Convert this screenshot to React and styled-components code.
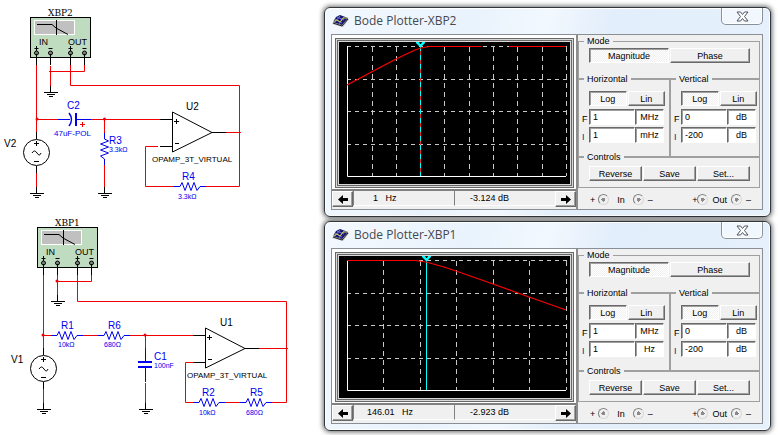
import React, { useId } from "react";
import styled, { createGlobalStyle, css } from "styled-components";

const GlobalStyle = createGlobalStyle`
  *, *::before, *::after { box-sizing: border-box; }
  body {
    margin: 0;
    background: #fff;
    color: #000;
    font: 9px/10px "Liberation Sans", Arial, sans-serif;
  }
`;

const Page = styled.main`
  display: grid;
  grid-template-columns: 324px minmax(0, 1fr);
`;

const Schematics = styled.section`
  display: flex;
  flex-direction: column;
`;

const Plotters = styled.section`
  display: flex;
  flex-direction: column;
  gap: 4px;
  padding: 7px 7px 4px 0;
`;

/* ---------- schematic drawing ---------- */

const Diagram = styled.svg`
  display: block;
  width: 324px;
  height: ${(p) => p.$height}px;
  fill: none;
  stroke: #000;
  font-family: "Liberation Sans", Arial, sans-serif;
`;

const Wire = styled.path`
  stroke: ${(p) => p.$color || "#f00000"};
  stroke-width: ${(p) => p.$width || 1};
`;

const Mark = styled.text`
  stroke: none;
  fill: ${(p) => p.$color || "#000"};
  font-size: ${(p) => p.$size || 10}px;
`;

const Heading = styled(Mark)`
  font-family: "DejaVu Serif", serif;
  font-size: 9px;
`;

const BLUE = "#0000f0";

function Ground({ x, y }) {
  return (
    <Wire
      $color="#000"
      d={`M${x + 0.5} ${y}v7M${x - 6} ${y + 6.5}h14M${x - 3} ${y + 8.5}h8M${x - 1} ${y + 10.5}h4`}
    />
  );
}

function Instrument({ x, y, name }) {
  return (
    <g transform={`translate(${x} ${y})`}>
      <Heading x="18" y="-1">{name}</Heading>
      <rect x="0.5" y="0.5" width="60" height="40" fill="#c0dcc0" />
      <rect x="4.5" y="3.5" width="40" height="14" fill="#c0c0c0" stroke="#fff" />
      <path d="M7 7.5H22L26 11L38 17.5M26.5 3V18" />
      <Mark x="9" y="28" $size={9}>IN</Mark>
      <Mark x="38" y="28" $size={9}>OUT</Mark>
      {[6.5, 20.5, 40.5, 54.5].map((cx, i) => (
        <g key={cx}>
          <path d={`M${cx - 2} 31.5h4${i % 2 ? "" : `M${cx} 29v5`}`} />
          <circle cx={cx} cy="36" r="2" fill="#808080" />
          <path d={`M${cx} 37V48`} />
        </g>
      ))}
    </g>
  );
}

function Source({ x, y }) {
  return (
    <g>
      <circle cx={x + 0.5} cy={y + 0.5} r="13" />
      <path d={`M${x + 0.5} ${y - 20}v7M${x + 0.5} ${y + 14}v7M${x - 2} ${y - 8.5}h5M${x + 0.5} ${y - 11}v5M${x - 2} ${y + 9.5}h5`} />
      <path d={`M${x - 4} ${y + 1}q2.500 -4 5 0t4 0`} />
    </g>
  );
}

function OpAmp({ x, y }) {
  return (
    <path
      d={`M${x + 0.5} ${y}V${y + 40}L${x + 40} ${y + 20.5}ZM${x + 40} ${y + 20.5}h14M${x - 12} ${y + 7.5}h12M${x - 12} ${y + 34.5}h12M${x + 2} ${y + 9.5}h5M${x + 4.5} ${y + 7}v5M${x + 3} ${y + 31.5}h4`}
    />
  );
}

function Resistor({ x, y, vertical }) {
  return (
    <path
      transform={`translate(${x} ${y})${vertical ? " rotate(90)" : ""}`}
      stroke={BLUE}
      d="M0 0H6L8 -4L11 4L14 -4L17 4L20 -4L23 4L26 0H32"
    />
  );
}

function HighPassSchematic() {
  return (
    <Diagram $height={217} viewBox="0 0 324 217" role="img" aria-label="High-pass circuit">
      <Wire d="M36.500 65V132M50.500 66V87M49 71.500H84.500V65M70.500 65V85.500H239.500V186.500H205M37 119.500H58M91 119.500H160M104.500 119V133M104.500 165V187M36.500 173V187M158 146.500H145.500V186.500H174M226 132.500H241" />
      <Instrument x={30} y={17} name="XBP2" />
      <Ground x={50} y={86} />
      <circle cx="37" cy="119" r="1.500" fill="#f00000" stroke="none" />
      <circle cx="104.500" cy="119" r="1.500" fill="#f00000" stroke="none" />
      <Wire $color={BLUE} d="M58 119.500H70M77 119.500H91" />
      <Wire $color={BLUE} $width={2} d="M76 113V126" />
      <path stroke={BLUE} strokeWidth="1.500" d="M69 113Q74 119.500 69 126" />
      <Wire d="M80 124.500H85M82.500 122V127" />
      <Mark x="67" y="109" $color={BLUE}>C2</Mark>
      <Mark x="54" y="136" $size={8} $color={BLUE}>47uF-POL</Mark>
      <Resistor x={104.5} y={133} vertical />
      <Mark x="109" y="144" $color={BLUE}>R3</Mark>
      <Mark x="109" y="152" $size={7} $color={BLUE}>3.3kΩ</Mark>
      <Ground x={104} y={187} />
      <Source x={36} y={152} />
      <Ground x={36} y={187} />
      <Mark x="4" y="147">V2</Mark>
      <OpAmp x={172} y={112} />
      <Mark x="186" y="110">U2</Mark>
      <Mark x="152" y="162" $size={8}>OPAMP_3T_VIRTUAL</Mark>
      <Resistor x={174} y={186.5} />
      <Mark x="182" y="180" $color={BLUE}>R4</Mark>
      <Mark x="178" y="199" $size={7} $color={BLUE}>3.3kΩ</Mark>
    </Diagram>
  );
}

function LowPassSchematic() {
  return (
    <Diagram $height={218} viewBox="0 217 324 218" role="img" aria-label="Low-pass circuit">
      <Wire d="M43.500 274V349M57.500 274V295M57 281.500H91.500V274M77.500 274V301.500H286.500V402.500H272M43 335.500H51M83 335.500H98M130 335.500H193M145.500 335V348M145.500 383V403M43.500 389V403M193 362.500H185.500V402.500H193M225 402.500H240M259 348.500H288" />
      <Instrument x={37} y={227} name="XBP1" />
      <Ground x={57} y={295} />
      <circle cx="57" cy="281" r="1.500" fill="#f00000" stroke="none" />
      <circle cx="43" cy="335" r="1.500" fill="#f00000" stroke="none" />
      <circle cx="145" cy="335" r="1.500" fill="#f00000" stroke="none" />
      <Resistor x={51} y={335.5} />
      <Resistor x={98} y={335.5} />
      <Mark x="61" y="329" $color={BLUE}>R1</Mark>
      <Mark x="58" y="347" $size={7} $color={BLUE}>10kΩ</Mark>
      <Mark x="108" y="329" $color={BLUE}>R6</Mark>
      <Mark x="104" y="347" $size={7} $color={BLUE}>680Ω</Mark>
      <Wire $color={BLUE} d="M145.500 348V361M145.500 368V382" />
      <Wire $color={BLUE} $width={2} d="M138 362H152M138 367H152" />
      <Mark x="154" y="360" $color={BLUE}>C1</Mark>
      <Mark x="154" y="368" $size={7} $color={BLUE}>100nF</Mark>
      <Ground x={145} y={403} />
      <Source x={43} y={368} />
      <Ground x={43} y={403} />
      <Mark x="11" y="363">V1</Mark>
      <OpAmp x={205} y={328} />
      <Mark x="220" y="326">U1</Mark>
      <Mark x="187" y="378" $size={8}>OPAMP_3T_VIRTUAL</Mark>
      <Resistor x={193} y={402.5} />
      <Resistor x={240} y={402.5} />
      <Mark x="202" y="396" $color={BLUE}>R2</Mark>
      <Mark x="250" y="396" $color={BLUE}>R5</Mark>
      <Mark x="199" y="415" $size={7} $color={BLUE}>10kΩ</Mark>
      <Mark x="246" y="415" $size={7} $color={BLUE}>680Ω</Mark>
    </Diagram>
  );
}

/* ---------- plotter window ---------- */

const Window = styled.article`
  display: flex;
  flex-direction: column;
  padding: 0 7px 6px 6px;
  border: 1px solid #30363c;
  border-radius: 6px;
  background: linear-gradient(105deg, #f3f8fe 0%, #e9f3fd 30%, #f2f8fe 45%, #e2eefb 58%, #e6f1fc 100%);
  box-shadow: inset 0 0 0 1px #fff, 0 0 5px 1px rgba(0, 0, 0, 0.6);
`;

const TitleBar = styled.header`
  display: flex;
  align-items: center;
  gap: 5px;
  height: 26px;
  padding-left: 1px;
`;

const Title = styled.h2`
  flex: 1;
  margin: 0;
  color: #46484c;
  font: 400 12px/16px "Open Sans", "Noto Sans", sans-serif;
`;

const CloseButton = styled.button`
  display: grid;
  place-items: center;
  align-self: flex-start;
  width: 42px;
  height: 17px;
  padding: 0;
  border: 1px solid #8b9199;
  border-top: 0;
  border-radius: 0 0 5px 5px;
  background: rgba(244, 249, 254, 0.8);
  box-shadow: inset 0 0 0 1px #fff;
`;

const Client = styled.div`
  display: grid;
  grid-template-columns: minmax(0, 1fr) 184px;
  height: 176px;
  border: 1px solid #8a8f96;
  background: #f0f0f0;
`;

const PlotColumn = styled.div`
  display: flex;
  flex-direction: column;
  min-width: 0;
  border-right: 2px solid #8c8c8c;
`;

const Bezel = styled.div`
  padding: 3px 2px 1px 3px;
  background: #fff;
  border-bottom: 2px solid #808080;
`;

const Screen = styled.div`
  border: 3px double #686868;
  padding: 1px;
  background: #d8d8d8;
`;

const PlotSvg = styled.svg`
  display: block;
  width: 100%;
  height: 142px;
  background: #000;
  fill: none;
`;

const Readout = styled.div`
  display: grid;
  grid-template-columns: 21px 1fr 1fr 21px;
  flex: 1;
  align-items: start;
  background: #f0f0f0;
`;

const raised = css`
  border: 1px solid;
  border-color: #fff #696969 #696969 #fff;
  box-shadow: inset -1px -1px 0 #a0a0a0;
  background: #f0f0f0;
`;

const sunken = css`
  border: 1px solid;
  border-color: #696969 #fff #fff #696969;
  box-shadow: inset 1px 1px 0 #a0a0a0;
  background: #fff;
`;

const ArrowButton = styled.button`
  ${raised}
  display: grid;
  place-items: center;
  height: 16px;
  padding: 0;
`;

const Value = styled.output`
  height: 15px;
  padding: 2px 0 0 ${(p) => p.$indent}px;
  border-left: 1px solid #808080;
  border-bottom: 1px solid #fff;
  white-space: pre;
`;

const Panel = styled.form`
  display: flex;
  flex-direction: column;
  width: 182px;
  padding-top: 1px;
`;

const Group = styled.fieldset`
  min-width: 0;
  height: ${(p) => p.$height}px;
  margin: ${(p) => (p.$joined ? "-5px" : 0)} 0 0;
  padding: ${(p) => p.$top}px 0 0 2px;
  border: 1px solid #a0a0a0;
`;

const Legend = styled.legend`
  position: relative;
  margin-left: 3px;
  padding: 0 3px;
  height: 10px;
  background: #f0f0f0;
`;

const Halves = styled.div`
  display: grid;
  grid-template-columns: 92px 90px;
`;

const ButtonRow = styled.div`
  display: flex;
  gap: 1px;
  width: ${(p) => p.$width}px;
  margin-left: 8px;
`;

const PushButton = styled.button`
  ${raised}
  flex: 1;
  height: 15px;
  padding: 0;
  color: #000;
  font: 9px/10px "Liberation Sans", Arial, sans-serif;
  ${(p) =>
    p.$pressed &&
    css`
      ${sunken}
      background: repeating-conic-gradient(#fff 0 25%, #f0f0f0 0 50%) 0 0 / 2px 2px;
    `}
`;

const Field = styled.div`
  display: grid;
  grid-template-columns: 8px 46px 29px;
  align-items: end;
  height: 16px;
  margin-top: ${(p) => (p.$first ? 3 : 2)}px;
`;

const FieldLabel = styled.label`
  padding-left: 1px;
  line-height: 12px;
  color: ${(p) => (p.$violet ? "#2a2080" : "#000")};
`;

const TextBox = styled.input`
  ${sunken}
  width: 100%;
  min-width: 0;
  height: 16px;
  padding: 0 3px;
  color: #000;
  font: 9px/10px "Liberation Sans", Arial, sans-serif;
  text-align: ${(p) => (p.$unit ? "center" : "left")};
`;

const Ports = styled.div`
  display: flex;
  justify-content: space-between;
  padding: 6px 9px 0 12px;
`;

const Port = styled.div`
  display: flex;
  align-items: center;
  gap: ${(p) => p.$gap}px;
`;

const PortOption = styled.label`
  display: flex;
  align-items: center;
  gap: ${(p) => p.$gap}px;
`;

const Radio = styled.input`
  appearance: none;
  width: 11px;
  height: 11px;
  margin: 0;
  border: 1px solid;
  border-color: #808080 #d8d8d8 #d8d8d8 #808080;
  border-radius: 50%;
  background: radial-gradient(circle, #8a8a8a 0 2px, #f0f0f0 2px);
`;

function TitleIcon() {
  return (
    <svg width="17" height="13" viewBox="0 0 17 13" aria-hidden="true">
      <path d="M5 4L12 2L17 4L11 12L0 9Z" fill="#b8b8bd" />
      <path d="M4 2L8 0L16 3L10 10L1 7Z" fill="#17176f" />
      <path d="M5 2L12 5M3 4L10 8M8 1L3 7M12 2L7 9" stroke="#7078d8" fill="none" />
      <path d="M1 7L5 5L8 7L11 3L15 3" stroke="#d4cf50" fill="none" />
      <path d="M1 8L10 11L16 4" stroke="#25252c" fill="none" />
    </svg>
  );
}

function CloseIcon() {
  return (
    <svg width="13" height="11" viewBox="0 0 13 11" aria-hidden="true">
      <path
        d="M1 1H4.500L6.500 3.500L8.500 1H12L8.500 5.500L12 10H8.500L6.500 7.500L4.500 10H1L4.500 5.500Z"
        fill="#fff"
        stroke="#50545c"
      />
    </svg>
  );
}

function Arrow({ right }) {
  return (
    <svg width="10" height="9" viewBox="0 0 10 9" aria-hidden="true">
      <path transform={right ? "translate(10 0) scale(-1 1)" : undefined} d="M0 4.500L5 0V3H10V6H5V9Z" fill="#000" />
    </svg>
  );
}

function Plot({ columns, flat, slope, cursor, dashedCursor }) {
  return (
    <PlotSvg viewBox="0 0 231 142" preserveAspectRatio="none" role="img" aria-label="Frequency response">
      {columns.map((x) => (
        <path key={x} stroke="#c8c8c8" strokeDasharray="5 4" d={`M${x + 0.5} 5V134`} />
      ))}
      {[4, 37, 69, 102].map((y) => (
        <path key={y} stroke="#c8c8c8" strokeDasharray="4 4" d={`M8 ${y + 0.5}H228`} />
      ))}
      <path stroke="#fff" d="M8.500 4V134.500H227" />
      {dashedCursor && <path stroke="#e03030" d={`M${cursor + 0.5} 4V134`} />}
      <path stroke="#0ff" strokeDasharray={dashedCursor ? "5 4" : undefined} d={`M${cursor + 0.5} 4V134`} />
      <path stroke="#f00" d={flat} />
      <path stroke="#f00" strokeWidth="1.250" d={slope} />
      <path fill="#0ff" d={`M${cursor - 4} 0H${cursor + 5}V1L${cursor + 1} 5H${cursor}L${cursor - 4} 1Z`} />
      <path fill="#000" d={`M${cursor - 1} 0h3l-1 2h-1z`} />
    </PlotSvg>
  );
}

function AxisGroup({ name, rows, width }) {
  const id = useId();
  return (
    <Group $height={83} $top={7} $joined>
      <Legend>{name}</Legend>
      <ButtonRow $width={width}>
        <PushButton type="button" $pressed aria-pressed="true">Log</PushButton>
        <PushButton type="button" aria-pressed="false">Lin</PushButton>
      </ButtonRow>
      {rows.map(([label, value, unit], i) => (
        <Field key={label} $first={i === 0}>
          <FieldLabel htmlFor={id + label} $violet={label === "I"}>{label}</FieldLabel>
          <TextBox id={id + label} defaultValue={value} />
          <TextBox $unit aria-label={`${name} ${label} unit`} defaultValue={unit} />
        </Field>
      ))}
    </Group>
  );
}

function PortPair({ name, gap, signGap }) {
  const id = useId();
  return (
    <Port $gap={gap} role="radiogroup" aria-label={name}>
      <PortOption $gap={signGap}>+<Radio type="radio" name={id} /></PortOption>
      <span>{name}</span>
      <PortOption $gap={4}><Radio type="radio" name={id} />–</PortOption>
    </Port>
  );
}

function BodePlotter({ name, plot, frequency, frequencyIndent, gain, horizontal, vertical }) {
  return (
    <Window>
      <TitleBar>
        <TitleIcon />
        <Title>Bode Plotter-{name}</Title>
        <CloseButton aria-label="Close"><CloseIcon /></CloseButton>
      </TitleBar>
      <Client>
        <PlotColumn>
          <Bezel>
            <Screen><Plot {...plot} /></Screen>
          </Bezel>
          <Readout>
            <ArrowButton aria-label="Move cursor left"><Arrow /></ArrowButton>
            <Value $indent={frequencyIndent}>{frequency}</Value>
            <Value $indent={15}>{gain}</Value>
            <ArrowButton aria-label="Move cursor right"><Arrow right /></ArrowButton>
          </Readout>
        </PlotColumn>
        <Panel>
          <Group $height={43} $top={2}>
            <Legend>Mode</Legend>
            <ButtonRow $width={161}>
              <PushButton type="button" $pressed aria-pressed="true">Magnitude</PushButton>
              <PushButton type="button" aria-pressed="false">Phase</PushButton>
            </ButtonRow>
          </Group>
          <Halves>
            <AxisGroup name="Horizontal" rows={horizontal} width={76} />
            <AxisGroup name="Vertical" rows={vertical} width={76} />
          </Halves>
          <Group $height={36} $top={4} $joined>
            <Legend>Controls</Legend>
            <ButtonRow $width={161}>
              <PushButton type="button">Reverse</PushButton>
              <PushButton type="button">Save</PushButton>
              <PushButton type="button">Set...</PushButton>
            </ButtonRow>
          </Group>
          <Ports>
            <PortPair name="In" gap={8} signGap={3} />
            <PortPair name="Out" gap={4} signGap={0} />
          </Ports>
        </Panel>
      </Client>
    </Window>
  );
}

const highPass = {
  columns: [33, 57, 81, 105, 130, 154, 178, 203, 227],
  flat: "M90 4.500H142M170 4.500H227",
  slope: "M8 43L57 17L76 8L82 6L90 4.500",
  cursor: 81,
  dashedCursor: true,
};

const lowPass = {
  columns: [44, 81, 117, 154, 190, 227],
  flat: "M8 4.500H76",
  slope: "M76 4.500L87 6L105 11L117 15L154 28L190 41L227 54",
  cursor: 87,
};

const verticalRows = [["F", "0", "dB"], ["I", "-200", "dB"]];

export default function App() {
  return (
    <>
      <GlobalStyle />
      <Page>
        <Schematics>
          <HighPassSchematic />
          <LowPassSchematic />
        </Schematics>
        <Plotters>
          <BodePlotter
            name="XBP2"
            plot={highPass}
            frequency="1   Hz"
            frequencyIndent={19}
            gain="-3.124 dB"
            horizontal={[["F", "1", "MHz"], ["I", "1", "mHz"]]}
            vertical={verticalRows}
          />
          <BodePlotter
            name="XBP1"
            plot={lowPass}
            frequency="146.01   Hz"
            frequencyIndent={13}
            gain="-2.923 dB"
            horizontal={[["F", "1", "MHz"], ["I", "1", "Hz"]]}
            vertical={verticalRows}
          />
        </Plotters>
      </Page>
    </>
  );
}
